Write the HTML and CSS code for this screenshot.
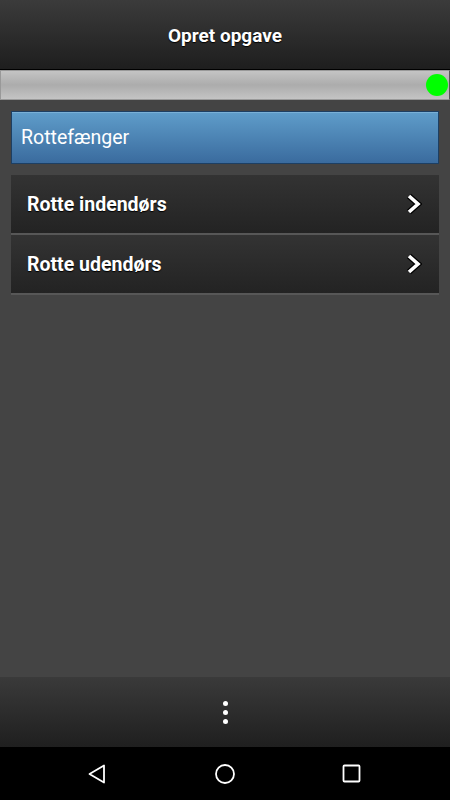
FILE: index.html
```html
<!DOCTYPE html>
<html lang="da">
<head>
    <meta charset="UTF-8">
    <meta name="viewport" content="width=device-width, initial-scale=1.0">
    <title>Opret opgave</title>
    <link rel="stylesheet" href="styles.css">
</head>
<body>

<div class="app">
    <header class="topbar">
        <h1>Opret opgave</h1>
    </header>

    <!-- status bar with connection indicator -->
    <div class="status">
        <span class="status-dot"></span>
    </div>

    <main class="content">
        <button class="category">Rottefænger</button>

        <ul class="tasks">
            <li class="task">
                <span>Rotte indendørs</span>
                <svg class="chevron" width="16" height="22" viewBox="0 0 16 22">
                    <path d="M3 3 L12 11 L3 19" fill="none" stroke="#000" stroke-width="6" stroke-linejoin="miter"/>
                    <path d="M3 3 L12 11 L3 19" fill="none" stroke="#fff" stroke-width="3.6" stroke-linejoin="miter"/>
                </svg>
            </li>
            <li class="task">
                <span>Rotte udendørs</span>
                <svg class="chevron" width="16" height="22" viewBox="0 0 16 22">
                    <path d="M3 3 L12 11 L3 19" fill="none" stroke="#000" stroke-width="6" stroke-linejoin="miter"/>
                    <path d="M3 3 L12 11 L3 19" fill="none" stroke="#fff" stroke-width="3.6" stroke-linejoin="miter"/>
                </svg>
            </li>
        </ul>
    </main>

    <footer class="bottombar">
        <span class="menu-dots"><i></i><i></i><i></i></span>
    </footer>

    <!-- android navigation -->
    <nav class="sysnav">
        <svg width="22" height="22" viewBox="0 0 22 22">
            <path d="M17 2.5 L17 19.5 L2.5 11 Z" fill="none" stroke="#fff" stroke-width="1.8" stroke-linejoin="round"/>
        </svg>
        <svg width="22" height="22" viewBox="0 0 22 22">
            <circle cx="11" cy="11" r="9" fill="none" stroke="#fff" stroke-width="1.8"/>
        </svg>
        <svg width="22" height="22" viewBox="0 0 22 22">
            <rect x="2.5" y="2.5" width="16" height="16" rx="1" fill="none" stroke="#fff" stroke-width="1.8"/>
        </svg>
    </nav>
</div>

</body>
</html>
```

FILE: styles.css
```css
body {
    margin: 0;
    padding: 0;
    font-family: Roboto, "Liberation Sans", sans-serif;
    background-color: #444;
    color: white;
}
.app {
    display: flex;
    flex-direction: column;
    height: 800px;
}
.topbar {
    height: 69px;
    background: linear-gradient(#3b3b3b, #1e1e1e);
    border-bottom: 1px solid #000;
    display: flex;
    align-items: center;
    justify-content: center;
}
.topbar h1 {
    margin: 2px 0 0;
    font-size: 19px;
    font-weight: bold;
    text-shadow: 0 1px 1px #000;
}
.status {
    height: 28px;
    background: linear-gradient(#c4c4c4, #acacac 50%, #c4c4c4);
    border: 1px solid #999;
    border-right-color: #555;
    display: flex;
    align-items: center;
    justify-content: flex-end;
    padding-right: 1px;
}
.status-dot {
    width: 22px;
    height: 22px;
    border-radius: 50%;
    background-color: #00ff00;
}
.content {
    flex: 1;
    padding: 11px 11px 0;
}
.category {
    display: block;
    width: 100%;
    height: 53px;
    margin: 0;
    padding: 0 9px;
    text-align: left;
    font-family: inherit;
    font-size: 19.5px;
    color: white;
    background: linear-gradient(#5f9dca, #3a6b9e);
    border: 1px solid #1d3f63;
    box-shadow: inset 0 1px 0 #7ab0d6;
}
.tasks {
    list-style: none;
    margin: 11px 0 0;
    padding: 0;
}
.task {
    height: 58px;
    display: flex;
    align-items: center;
    justify-content: space-between;
    padding: 0 17px 0 16px;
    background: linear-gradient(#333, #232323);
    border-bottom: 2px solid #575757;
    font-size: 19.5px;
    font-weight: bold;
    text-shadow: 0 1px 1px #000;
}
.bottombar {
    height: 70px;
    background: linear-gradient(#3a3a3a, #1f1f1f);
    border-top: 1px solid #444;
    display: flex;
    align-items: center;
    justify-content: center;
}
.menu-dots {
    display: flex;
    flex-direction: column;
    gap: 4px;
}
.menu-dots i {
    width: 5px;
    height: 5px;
    border-radius: 50%;
    background-color: white;
}
.sysnav {
    height: 53px;
    background-color: #000;
    display: flex;
    align-items: center;
    justify-content: space-around;
    padding: 0 35px;
}
```
